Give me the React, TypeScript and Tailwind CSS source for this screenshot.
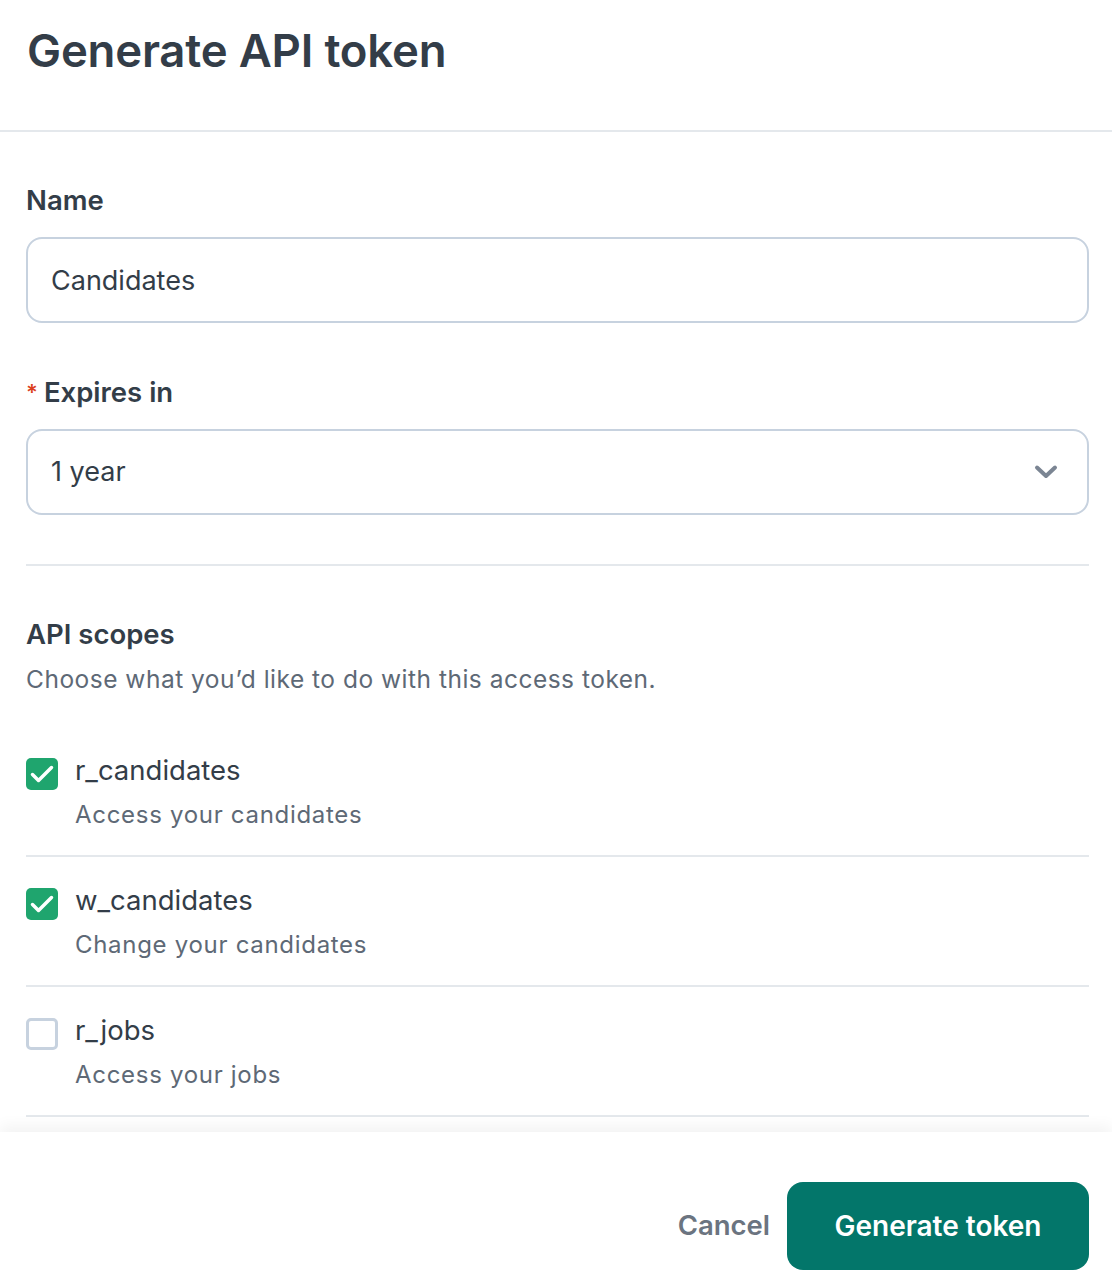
import React, { useState } from "react";

const scopes = [
  { key: "r_candidates", desc: "Access your candidates", checked: true },
  { key: "w_candidates", desc: "Change your candidates", checked: true },
  { key: "r_jobs", desc: "Access your jobs", checked: false },
];

function Checkbox({ checked, onClick }: { checked: boolean; onClick: () => void }) {
  return (
    <button
      type="button"
      onClick={onClick}
      className={`mt-2 flex h-8 w-8 shrink-0 items-center justify-center rounded-[5px] ${
        checked ? "bg-[#1fa56e]" : "border-[3px] border-[#c7d2df] bg-white"
      }`}
    >
      {checked && (
        <svg width="32" height="32" viewBox="0 0 32 32" fill="none">
          <path d="M6.5 16.5l6 6L25.5 9.5" stroke="white" strokeWidth="3.5" strokeLinecap="round" strokeLinejoin="round" />
        </svg>
      )}
    </button>
  );
}

export default function App() {
  const [name, setName] = useState("Candidates");
  const [checked, setChecked] = useState(scopes.map((s) => s.checked));

  return (
    <div className="flex h-[1286px] w-full flex-col overflow-hidden bg-white font-['Inter','Noto_Sans',sans-serif] text-[#333d48]">
      {/* Header */}
      <div className="flex h-[132px] shrink-0 items-center border-b-2 border-[#e4e8ec] pb-[28px] pl-[27px]">
        <h1 className="text-[45.5px] font-semibold tracking-[-0.2px]">Generate API token</h1>
      </div>

      {/* Body */}
      <div className="flex-1 overflow-hidden pl-[26px] pr-[23px] pt-[50px]">
        <label className="block text-[27.5px] font-semibold leading-[36px]">Name</label>
        <input
          value={name}
          onChange={(e) => setName(e.target.value)}
          className="mt-[19px] h-[86px] w-full rounded-[16px] border-2 border-[#c7d2df] px-[23px] text-[27px] text-[#333d48] outline-none"
        />

        <label className="mt-[51px] flex items-center text-[27.5px] font-semibold leading-[36px]">
          <span className="mr-[6px] text-[22px] text-[#dc3f1e]">*</span>
          Expires in
        </label>
        <div className="mt-[19px] flex h-[86px] w-full items-center justify-between rounded-[16px] border-2 border-[#c7d2df] pl-[23px] pr-[29px] text-[27px]">
          <span>1 year</span>
          <svg width="24" height="16" viewBox="0 0 24 16" fill="none">
            <path d="M3 3.5l9 8.5 9-8.5" stroke="#7b8593" strokeWidth="4" strokeLinecap="round" strokeLinejoin="round" />
          </svg>
        </div>

        <div className="mt-[49px] h-[2px] bg-[#e4e8ec]" />

        <h2 className="mt-[50px] text-[27.5px] font-semibold leading-[36px]">API scopes</h2>
        <p className="mt-[9px] text-[24.5px] leading-[36px] tracking-[0.5px] text-[#5e6976]">
          Choose what you’d like to do with this access token.
        </p>

        <ul className="mt-[30px]">
          {scopes.map((s, i) => (
            <li key={s.key} className="flex gap-[17px] border-b-2 border-[#e4e8ec] pb-[22px] pt-[23px]">
              <Checkbox
                checked={checked[i]}
                onClick={() => setChecked((c) => c.map((v, j) => (j === i ? !v : v)))}
              />
              <div>
                <div className="text-[27.5px] leading-[40px]">{s.key}</div>
                <div className="mt-[7px] text-[24px] leading-[36px] tracking-[0.7px] text-[#5e6976]">{s.desc}</div>
              </div>
            </li>
          ))}
        </ul>
      </div>

      {/* Footer */}
      <div className="relative flex h-[154px] shrink-0 items-center justify-end gap-[17px] bg-white pr-[23px] pt-[34px] shadow-[0_-6px_14px_rgba(0,0,0,0.05)]">
        <button className="px-0 text-[27.5px] font-semibold text-[#6b7480]">Cancel</button>
        <button className="h-[88px] w-[302px] rounded-[16px] bg-[#03766a] text-[28px] font-semibold text-white">
          Generate token
        </button>
      </div>
    </div>
  );
}
